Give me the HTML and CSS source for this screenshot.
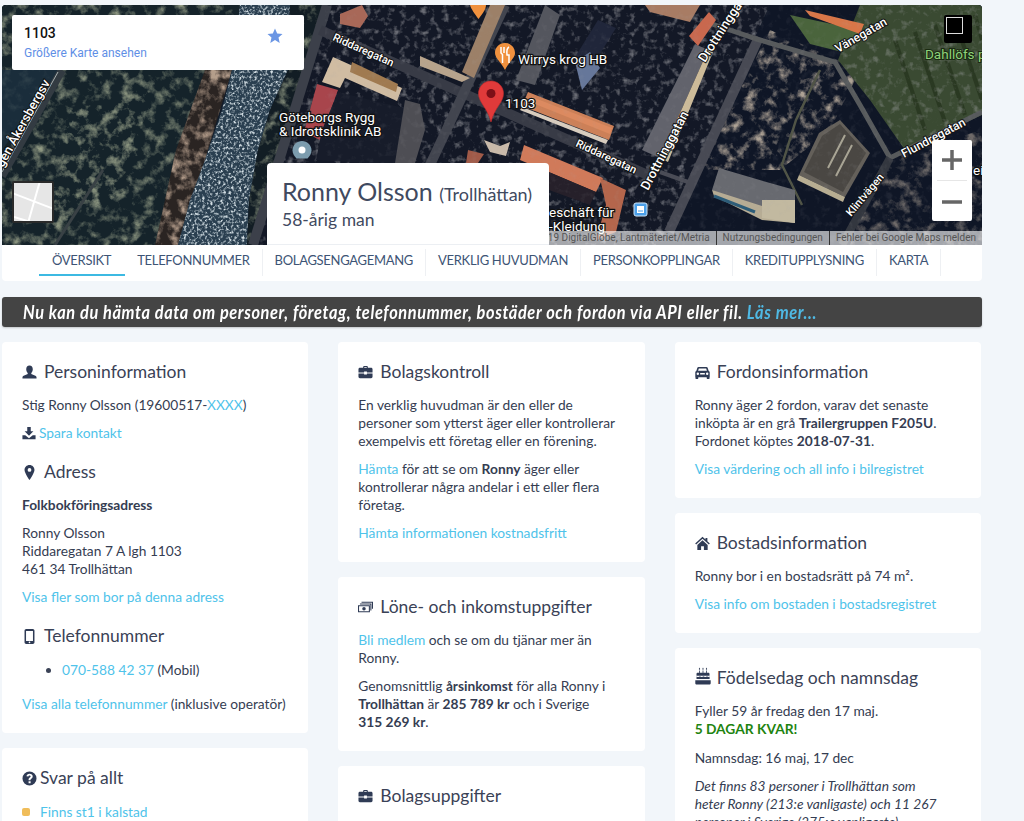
FILE: index.html
```html
<!DOCTYPE html>
<html lang="sv">
<head>
<meta charset="utf-8">
<title>Ronny Olsson</title>
<link rel="stylesheet" href="styles.css">
</head>
<body>
<svg class="sprite" aria-hidden="true">
  <symbol id="i-user" viewBox="0 0 16 16"><path d="M8 .5c2.300 0 3.500 1.800 3.500 4 0 1.600-.6 3-1.600 3.900v1.300l4.300 1.800c.9.400 1.300 1 1.300 1.900v1.100H.5v-1.100c0-.9.4-1.500 1.300-1.900l4.300-1.800V8.400C5.100 7.500 4.500 6.100 4.500 4.500c0-2.200 1.200-4 3.500-4z"/></symbol>
  <symbol id="i-save" viewBox="0 0 16 16"><path d="M6 1h4v5h3L8 11 3 6h3zM.5 10.500h3.200L8 14l4.300-3.500h3.200V15H.5z"/></symbol>
  <symbol id="i-pin" viewBox="0 0 16 16"><path fill-rule="evenodd" d="M8 0c3 0 5.300 2.300 5.300 5.300C13.300 8.500 8 16 8 16S2.700 8.500 2.700 5.300C2.700 2.300 5 0 8 0zm0 3.300a2 2 0 1 0 0 4 2 2 0 0 0 0-4z"/></symbol>
  <symbol id="i-phone" viewBox="0 0 16 16"><path fill-rule="evenodd" d="M4.500 0h7c1 0 1.800.8 1.800 1.800v12.400c0 1-.8 1.800-1.800 1.800h-7c-1 0-1.800-.8-1.800-1.800V1.800C2.700.8 3.500 0 4.500 0zm-.2 2v10.700h7.400V2zM8 13.300a.9.9 0 1 0 0 1.800.9.9 0 0 0 0-1.800z"/></symbol>
  <symbol id="i-q" viewBox="0 0 16 16"><path fill-rule="evenodd" d="M8 .5a7.500 7.500 0 1 1 0 15 7.500 7.500 0 0 1 0-15zM7 10.800v2.200h2.200v-2.200zM8 3C6.200 3 5 4 4.800 5.600l2 .3C6.900 5.200 7.300 4.800 8 4.800s1.200.4 1.200 1c0 .5-.3.8-.9 1.200-.9.6-1.300 1.200-1.300 2.200v.6h2.100v-.4c0-.5.2-.7.8-1.100 1-.7 1.500-1.400 1.500-2.600C11.400 4 10 3 8 3z"/></symbol>
  <symbol id="i-case" viewBox="0 0 16 16"><path fill-rule="evenodd" d="M5.500 3V2c0-.6.400-1 1-1h3c.6 0 1 .4 1 1v1h3.500c.8 0 1.500.7 1.500 1.500V8H9.500V7h-3v1H.500V4.500C.5 3.700 1.200 3 2 3zm1.200 0h2.600V2.200H6.700zM.5 9h6v1.200h3V9h6v3.500c0 .8-.7 1.500-1.500 1.500H2c-.8 0-1.500-.7-1.500-1.500z"/></symbol>
  <symbol id="i-money" viewBox="0 0 17 16"><path fill-rule="evenodd" d="M4 1.500h13v8h-1.200V2.700H4zM2.200 3.500h13v8H14V4.700H2.200zM0 5.500h13.500V13.500H0zm1.200 1.200v5.600h11.100V6.700zM6.800 7.500a2 2 0 1 1 0 4 2 2 0 0 1 0-4z"/></symbol>
  <symbol id="i-car" viewBox="0 0 16 16"><path fill-rule="evenodd" d="M3.800 2h8.400c.6 0 1.100.4 1.300 1l1 3c.7.300 1.200 1 1.200 1.800V13h-.2v1c0 .6-.4 1-1 1h-1c-.6 0-1-.4-1-1v-1H3.500v1c0 .6-.4 1-1 1h-1c-.6 0-1-.4-1-1v-1H.3V7.800C.3 7 .8 6.300 1.500 6l1-3c.2-.6.700-1 1.300-1zm.3 1.600L3.300 6h9.400l-.8-2.400zM3 8a1.300 1.300 0 1 0 0 2.600A1.300 1.300 0 0 0 3 8zm10 0a1.300 1.300 0 1 0 0 2.600A1.300 1.300 0 0 0 13 8zM5.500 8.500v1.500h5V8.500z"/></symbol>
  <symbol id="i-home" viewBox="0 0 16 16"><path d="M8 .8l3.200 2.900V2h2v3.500L15.800 8l-1 1.100L8 3 1.200 9.100.2 8zM8 4.500l5.500 5V15h-4v-4h-3v4h-4V9.500z"/></symbol>
  <symbol id="i-cake" viewBox="0 0 16 18"><path fill-rule="evenodd" d="M4.500.5l.7 1.500-.7.900-.7-.9zM8 .5l.7 1.500-.7.900-.7-.9zM11.500.5l.7 1.500-.7.900-.7-.9zM4.100 3.400h.8v2.300h-.8zM7.600 3.400h.8v2.300h-.8zM11.100 3.400h.8v2.300h-.8zM2.800 5.700h10.400c.8 0 1.300.5 1.300 1.300v1.800H1.500V7c0-.8.500-1.300 1.300-1.300zM1.500 9.500c.6.300 1 .6 1.600.6.800 0 1.200-.6 1.800-.6s1 .6 1.800.6 1.200-.6 1.800-.6 1 .6 1.800.6 1.200-.6 1.800-.6.900.4 1.500.5.800-.2 1-.4v2.500H1.500zM.3 13.300h15.400v2.900c0 .9-.6 1.400-1.500 1.400H1.800c-.9 0-1.500-.5-1.500-1.400z"/></symbol>
</svg>

<div class="page">
  <header class="hero">
    <svg class="map-art" viewBox="2 5 980 240" preserveAspectRatio="none" xmlns="http://www.w3.org/2000/svg">
      <defs>
        <filter id="f-trees" x="0" y="0" width="100%" height="100%">
          <feTurbulence type="fractalNoise" baseFrequency=".09" numOctaves="4" seed="7"/>
          <feColorMatrix values="0 0 0 0 .30  0 0 0 0 .34  0 0 0 0 .24  2.400 0 0 0 -1.150"/>
          <feComposite in2="SourceGraphic" operator="in"/>
        </filter>
        <filter id="f-brown" x="0" y="0" width="100%" height="100%">
          <feTurbulence type="fractalNoise" baseFrequency=".10" numOctaves="4" seed="3"/>
          <feColorMatrix values="0 0 0 0 .46  0 0 0 0 .34  0 0 0 0 .26  2.600 0 0 0 -1.100"/>
          <feComposite in2="SourceGraphic" operator="in"/>
        </filter>
        <filter id="f-water" x="0" y="0" width="100%" height="100%">
          <feTurbulence type="fractalNoise" baseFrequency=".38" numOctaves="2" seed="9"/>
          <feColorMatrix values="0 0 0 0 .66  0 0 0 0 .74  0 0 0 0 .78  3.200 0 0 0 -1.500"/>
          <feComposite in2="SourceGraphic" operator="in"/>
        </filter>
        <filter id="f-grain" x="0" y="0" width="100%" height="100%">
          <feTurbulence type="fractalNoise" baseFrequency=".14" numOctaves="3" seed="12"/>
          <feColorMatrix values="0 0 0 0 .42  0 0 0 0 .42  0 0 0 0 .44  3 0 0 0 -1.550"/>
          <feComposite in2="SourceGraphic" operator="in"/>
        </filter>
        <filter id="f-park" x="0" y="0" width="100%" height="100%">
          <feTurbulence type="fractalNoise" baseFrequency=".09" numOctaves="4" seed="21"/>
          <feColorMatrix values="0 0 0 0 .42  0 0 0 0 .36  0 0 0 0 .30  3 0 0 0 -1.450"/>
          <feComposite in2="SourceGraphic" operator="in"/>
        </filter>
      </defs>

      <rect x="2" y="5" width="980" height="240" fill="#121c2a"/>
      <!-- forest west of the river -->
      <polygon points="2,5 255,5 170,245 2,245" fill="#15232a"/>
      <polygon points="2,5 255,5 170,245 2,245" fill="#fff" filter="url(#f-trees)"/>
      <polygon points="2,70 60,70 2,150" fill="#1b3040" opacity=".8"/>
      <polygon points="70,110 150,90 130,190 50,230" fill="#fff" filter="url(#f-trees)" opacity=".7"/>
      <!-- river bank and river -->
      <polygon points="205,70 232,70 205,160 178,245 155,245 176,150" fill="#2a2422"/>
      <polygon points="205,70 232,70 205,160 178,245 155,245 176,150" fill="#fff" filter="url(#f-brown)"/>
      <polygon points="240,5 290,5 288,70 270,110 258,150 249,200 247,245 178,245 190,200 205,160 222,110 232,70" fill="#2a3f50"/>
      <polygon points="240,5 290,5 288,70 270,110 258,150 249,200 247,245 178,245 190,200 205,160 222,110 232,70" fill="#fff" filter="url(#f-water)"/>
      <!-- east bank -->
      <polygon points="290,5 325,5 252,245 247,245 249,200 258,150 270,110 288,70" fill="#121d24"/>
      <polygon points="290,5 325,5 252,245 247,245 249,200 258,150 270,110 288,70" fill="#fff" filter="url(#f-trees)"/>
      <!-- town ground -->
      <polygon points="325,5 770,5 660,245 252,245" fill="#131826"/>
      <polygon points="325,5 770,5 660,245 252,245" fill="#fff" filter="url(#f-grain)" opacity=".5"/>
      <!-- park and field -->
      <polygon points="770,5 982,5 982,245 660,245" fill="#0f1626"/>
      <polygon points="770,30 860,70 830,130 780,170 700,170" fill="#fff" filter="url(#f-park)"/>
      <polygon points="880,160 982,130 982,245 850,245" fill="#fff" filter="url(#f-park)" opacity=".6"/>
      <polygon points="860,5 982,5 982,115 905,150 870,100 838,60" fill="#3a4a32"/>
      <g stroke="#27351f" stroke-width="4" opacity=".8">
        <path d="M895 40L925 130M915 32L945 122M935 25L965 115M955 20L982 100M975 15L982 40"/>
      </g>
      <polygon points="860,5 982,5 982,115 905,150 870,100 838,60" fill="#fff" filter="url(#f-grain)" opacity=".3"/>
      <polygon points="790,15 860,30 842,52 810,44" fill="#4a643c"/>

      <!-- roads -->
      <g fill="none" stroke-linecap="butt">
        <path d="M62 70L2 176" stroke="#333b42" stroke-width="8"/>
        <path d="M58 72L2 172" stroke="#a8b0b0" stroke-width="1"/>
        <path d="M103 170L55 245" stroke="#394145" stroke-width="3"/>
        <path d="M327 5L253 245" stroke="#3c404a" stroke-width="10"/>
        <path d="M320 30L650 176" stroke="#383b46" stroke-width="10"/>
        <path d="M505 5L430 165" stroke="#42454f" stroke-width="10"/>
        <path d="M759 37L669 232" stroke="#484a54" stroke-width="10"/>
        <path d="M700 20L760 40L835 62L860 105L890 158L982 112" stroke="#575a5c" stroke-width="5"/>
        <path d="M890 158L842 245" stroke="#33373f" stroke-width="8"/>
        <path d="M820 70L796 120L782 165L802 205" stroke="#505446" stroke-width="2.500"/>
        <path d="M660 172L688 182" stroke="#4a4c56" stroke-width="4"/>
      </g>

      <!-- buildings -->
      <g>
        <polygon points="340,14 362,5 368,16 360,28 340,24" fill="#a86858"/>
        <polygon points="333,57 402,88 397,101 345,78 340,88 322,82" fill="#d0bca2"/>
        <polygon points="352,62 398,84 396,92 350,72" fill="#a07a50"/>
        <polygon points="317,84 338,90 320,140 304,132" fill="#a8454c"/>
        <polygon points="338,92 404,108 422,110 395,165 316,160 322,130" fill="#171c2a"/>
        <polygon points="420,56 470,78 462,82 420,66" fill="#b8a48c"/>
        <polygon points="505,5 474,78 462,72 490,5" fill="#9c8068"/>
        <polygon points="405,100 420,104 425,130 415,163 395,163" fill="#4e4e54"/>
        <polygon points="484,140 500,146 510,142 506,156 490,152" fill="#c9baaa"/>
        <polygon points="468,150 484,154 478,163 466,163" fill="#a05a48"/>
        <polygon points="528,92 614,126 609,140 522,106" fill="#cc8058"/>
        <polygon points="532,97 612,128 610,134 530,102" fill="#dc8a60"/>
        <polygon points="522,107 608,140 606,144 520,110" fill="#d8cdbf"/>
        <polygon points="524,145 603,178 596,192 520,160" fill="#d07a5a"/>
        <polygon points="549,172 596,192 590,205 549,190" fill="#26202a"/>
        <polygon points="600,178 626,190 616,232 596,240 606,205" fill="#b4664c"/>
        <polygon points="695,44 708,50 660,158 642,150" fill="#62636c"/>
        <polygon points="708,50 713,52 668,162 660,158" fill="#cdbb99"/>
        <polygon points="689,36 709,12 716,20 698,46" fill="#c9684e"/>
        <polygon points="645,5 700,5 690,22 650,12" fill="#a87c64"/>
        <polygon points="805,10 864,24 860,34 810,16" fill="#d87648"/>
        <polygon points="598,20 616,28 590,70 572,62" fill="#20263a"/>
        <polygon points="575,62 590,52 600,68 582,90" fill="#66779a"/>
        <polygon points="545,5 560,15 535,85 516,80" fill="#54565e"/>
        <polygon points="840,120 870,153 845,197 799,175 819,133" fill="#64605a"/>
        <polygon points="840,124 866,153 843,192 804,172 822,136" fill="#4a4743"/>
        <path d="M845 135L828 168M852 145L836 176" stroke="#a8a494" stroke-width="2"/>
        <polygon points="799,175 845,197 843,202 797,180" fill="#b8ae92"/>
        <polygon points="719,168 770,183 795,190 795,223 762,217 712,190" fill="#686a70"/>
        <polygon points="712,190 762,206 795,214 795,223 762,220 714,196" fill="#b6ac94"/>
        <polygon points="762,200 795,200 795,223 762,218" fill="#c2b9a0"/>
        <path d="M714 196L755 212" stroke="#2c5c78" stroke-width="3"/>
      </g>
      <rect x="325" y="5" width="657" height="240" fill="#fff" filter="url(#f-grain)" opacity=".1"/>

      <!-- street and place names -->
      <g class="road-labels">
        <text class="rl-big" transform="translate(3 168) rotate(-61)">gen Åkersbergsv</text>
        <text transform="translate(332 40) rotate(24)">Riddaregatan</text>
        <text transform="translate(575 146) rotate(25)">Riddaregatan</text>
        <text class="rl-big" transform="translate(648 191) rotate(-62)">Drottninggatan</text>
        <text class="rl-big" transform="translate(705 63) rotate(-57)">Drottninggatan</text>
        <text class="rl-mid" transform="translate(838 53) rotate(-30)">Vänegatan</text>
        <text class="rl-mid" transform="translate(904 158) rotate(-28)">Flundregatan</text>
        <text transform="translate(851 217) rotate(-50)">Klintvägen</text>
      </g>
      <g class="poi-labels">
        <text x="279" y="122">Göteborgs Rygg</text>
        <text x="279" y="136">&amp; Idrottsklinik AB</text>
        <text x="518" y="64">Wirrys krog HB</text>
        <text x="505" y="108">1103</text>
        <text x="549" y="217">eschäft für</text>
        <text x="549" y="231">-Kleidung</text>
        <text x="973" y="175">ei</text>
      </g>
      <text class="poi-green" x="925" y="59">Dahllöfs p</text>

      <!-- markers -->
      <path d="M302 141c5 0 9.500 4 9.500 9.500 0 3-2 6-4 8h-11c-2-2-4-5-4-8 0-5.500 4.500-9.500 9.500-9.500z" fill="#7c9cae"/>
      <circle cx="302" cy="150" r="3.500" fill="#fff"/>
      <path d="M478 5h8c0 5-4 9-7.500 14C475 14 471 9 470 5z" fill="#f0913e"/>
      <path d="M505 43c6 0 10 4.500 10 10 0 5-6 9-10 17-4-8-10-12-10-17 0-5.500 4-10 10-10z" fill="#f0913e"/>
      <path d="M501 47v6l1.500 1.500V63M504 47v6M509 47c-2 1-2.500 4-2 8h2v8" fill="none" stroke="#fff" stroke-width="1.500"/>
      <path d="M491 81c7 0 12.500 5.500 12.500 12.500 0 9-9 14-12.500 28.500-3.500-14.500-12.500-19.500-12.500-28.500C478.500 86.500 484 81 491 81z" fill="#e03a3a" stroke="#c42a2a" stroke-width=".6"/>
      <circle cx="491" cy="93.500" r="4.500" fill="#7c0f17"/>
      <rect x="634" y="203" width="13" height="13" rx="2" fill="#4b9fe8" stroke="#cfe4f7"/>
      <path d="M637 206h7v7h-7z" fill="#fff"/>
      <path d="M638 211h5" stroke="#4b9fe8" stroke-width="1"/>
    </svg>

    <div class="place-card">
      <div class="place-text">
        <strong class="place-name">1103</strong>
        <a class="place-link" href="#">Größere Karte ansehen</a>
      </div>
      <svg class="place-star" viewBox="0 0 16 16"><path d="M8 .5l2.200 5 5.300.5-4 3.600 1.200 5.300L8 12.100 3.300 14.900l1.200-5.300-4-3.600 5.300-.5z"/></svg>
    </div>
    <div class="fullscreen"><span class="fullscreen-box"></span></div>
    <div class="zoom-ctl">
      <svg class="zoom-btn" viewBox="0 0 40 40"><path d="M10 20h20M20 10v20"/></svg>
      <span class="zoom-sep"></span>
      <svg class="zoom-btn" viewBox="0 0 40 40"><path d="M10 21h20"/></svg>
    </div>
    <div class="sat-thumb">
      <svg viewBox="0 0 38 38"><rect width="38" height="38" fill="#e6e6e6"/><path d="M-2 10L40 26M26-2L14 40M0 34L20 40" stroke="#fff" stroke-width="2" fill="none"/></svg>
    </div>
    <div class="attrib">
      <span class="attrib-item attrib-first">©2019 DigitalGlobe, Lantmäteriet/Metria</span>
      <span class="attrib-item">Nutzungsbedingungen</span>
      <span class="attrib-item">Fehler bei Google Maps melden</span>
    </div>
    <div class="title-card">
      <h1 class="title-name">Ronny Olsson <small class="title-city">(Trollhättan)</small></h1>
      <p class="title-sub">58-årig man</p>
    </div>
  </header>

  <nav class="tabs">
    <a class="tab tab-active" href="#">Översikt</a>
    <a class="tab" href="#">Telefonnummer</a>
    <a class="tab" href="#">Bolagsengagemang</a>
    <a class="tab" href="#">Verklig huvudman</a>
    <a class="tab" href="#">Personkopplingar</a>
    <a class="tab" href="#">Kreditupplysning</a>
    <a class="tab" href="#">Karta</a>
  </nav>

  <div class="banner"><span class="banner-text">Nu kan du hämta data om personer, företag, telefonnummer, bostäder och fordon via API eller fil. <a class="banner-link" href="#">Läs mer...</a></span></div>

  <main class="columns">
    <div class="col">
      <section class="card">
        <h3 class="card-h"><svg class="ic"><use href="#i-user"/></svg>Personinformation</h3>
        <p>Stig Ronny Olsson (19600517-<a href="#">XXXX</a>)</p>
        <p><svg class="ic-inline"><use href="#i-save"/></svg><a href="#">Spara kontakt</a></p>
        <h3 class="card-h card-h-sub"><svg class="ic"><use href="#i-pin"/></svg>Adress</h3>
        <p><b>Folkbokföringsadress</b></p>
        <p>Ronny Olsson<br>Riddaregatan 7 A lgh 1103<br>461 34 Trollhättan</p>
        <p><a href="#">Visa fler som bor på denna adress</a></p>
        <h3 class="card-h card-h-sub"><svg class="ic"><use href="#i-phone"/></svg>Telefonnummer</h3>
        <ul class="phones"><li><a href="#">070-588 42 37</a> (Mobil)</li></ul>
        <p class="last"><a href="#">Visa alla telefonnummer</a> (inklusive operatör)</p>
      </section>
      <section class="card">
        <h3 class="card-h card-h-tight"><svg class="ic ic-q"><use href="#i-q"/></svg>Svar på allt</h3>
        <p class="qa"><span class="qa-dot"></span><a href="#">Finns st1 i kalstad</a></p>
      </section>
    </div>

    <div class="col">
      <section class="card">
        <h3 class="card-h"><svg class="ic"><use href="#i-case"/></svg>Bolagskontroll</h3>
        <p>En verklig huvudman är den eller de personer som ytterst äger eller kontrollerar exempelvis ett företag eller en förening.</p>
        <p><a href="#">Hämta</a> för att se om <b>Ronny</b> äger eller kontrollerar några andelar i ett eller flera företag.</p>
        <p class="last"><a href="#">Hämta informationen kostnadsfritt</a></p>
      </section>
      <section class="card">
        <h3 class="card-h"><svg class="ic"><use href="#i-money"/></svg>Löne- och inkomstuppgifter</h3>
        <p><a href="#">Bli medlem</a> och se om du tjänar mer än Ronny.</p>
        <p class="last">Genomsnittlig <b>årsinkomst</b> för alla Ronny i <b>Trollhättan</b> är <b>285&nbsp;789&nbsp;kr</b> och i Sverige <b>315&nbsp;269&nbsp;kr</b>.</p>
      </section>
      <section class="card">
        <h3 class="card-h"><svg class="ic"><use href="#i-case"/></svg>Bolagsuppgifter</h3>
      </section>
    </div>

    <div class="col">
      <section class="card">
        <h3 class="card-h"><svg class="ic"><use href="#i-car"/></svg>Fordonsinformation</h3>
        <p>Ronny äger 2 fordon, varav det senaste inköpta är en grå <b>Trailergruppen F205U</b>. Fordonet köptes <b>2018-07-31</b>.</p>
        <p class="last"><a href="#">Visa värdering och all info i bilregistret</a></p>
      </section>
      <section class="card">
        <h3 class="card-h"><svg class="ic"><use href="#i-home"/></svg>Bostadsinformation</h3>
        <p>Ronny bor i en bostadsrätt på 74 m².</p>
        <p class="last"><a href="#">Visa info om bostaden i bostadsregistret</a></p>
      </section>
      <section class="card">
        <h3 class="card-h"><svg class="ic ic-cake"><use href="#i-cake"/></svg>Födelsedag och namnsdag</h3>
        <p class="birth">Fyller 59 år fredag den 17 maj.<br><b class="countdown">5 DAGAR KVAR!</b></p>
        <p>Namnsdag: 16 maj, 17 dec</p>
        <p><i>Det finns 83 personer i Trollhättan som<br>heter Ronny (213:e vanligaste) och 11&nbsp;267<br>personer i Sverige (275:e vanligaste).</i></p>
      </section>
    </div>
  </main>
</div>
</body>
</html>
```
FILE: styles.css
```css
* { box-sizing: border-box; }
html, body { height: 821px; overflow: hidden; }
body {
  margin: 0;
  background: #f2f6fa;
  color: #353d52;
  font: 13.75px/18px Lato, "Noto Sans", sans-serif;
}
a { color: #4fc3ea; text-decoration: none; }
b { font-weight: 700; }
.sprite { display: none; }

.page { width: 980px; margin: 5px 0 0 2px; }

/* map header */
.hero {
  position: relative;
  height: 240px;
  overflow: hidden;
  border-radius: 4px 4px 0 0;
  background: #14202c;
}
.map-art { display: block; width: 980px; height: 240px; }
.road-labels text {
  font: 500 11px Roboto, sans-serif;
  fill: #fff;
  stroke: #111;
  stroke-width: 2px;
  paint-order: stroke;
}
.road-labels .rl-big { font-size: 13px; }
.road-labels .rl-mid { font-size: 12px; }
.poi-labels text {
  font: 400 13.5px Roboto, sans-serif;
  fill: #fff;
  stroke: #111;
  stroke-width: 2.5px;
  paint-order: stroke;
}
.poi-green {
  font: 400 13.5px Roboto, sans-serif;
  fill: #8fd27a;
  stroke: #1a2a12;
  stroke-width: 2px;
  paint-order: stroke;
}

.place-card {
  position: absolute;
  left: 10px;
  top: 10px;
  width: 292px;
  height: 55px;
  padding: 10px 12px;
  display: flex;
  justify-content: space-between;
  background: #fff;
  border-radius: 2px;
  font-family: Roboto, sans-serif;
}
.place-text { display: flex; flex-direction: column; }
.place-name { font-size: 14px; font-weight: 500; line-height: 17px; color: #111; }
.place-link { margin-top: 3px; font-size: 12px; line-height: 16px; color: #5f8fe6; }
.place-star { width: 16px; height: 16px; margin: 3px 9px 0 0; fill: #6b96e4; }

.fullscreen {
  position: absolute;
  right: 10px;
  top: 10px;
  width: 28px;
  height: 28px;
  padding: 2px;
  background: #000;
  border-radius: 2px;
}
.fullscreen-box { display: block; width: 17px; height: 17px; border: 1px solid #ddd; }

.zoom-ctl {
  position: absolute;
  right: 10px;
  top: 135px;
  width: 40px;
  height: 81px;
  display: flex;
  flex-direction: column;
  align-items: center;
  background: #fff;
  border-radius: 2px;
}
.zoom-btn { width: 40px; height: 40px; flex: none; fill: none; stroke: #666; stroke-width: 3.500; }
.zoom-sep { width: 30px; height: 1px; flex: none; background: #e6e6e6; }

.sat-thumb {
  position: absolute;
  left: 10px;
  top: 176px;
  width: 42px;
  height: 42px;
  border: 2px solid #2a2a2a;
  border-radius: 2px;
  overflow: hidden;
  background: #fff;
}
.sat-thumb svg { display: block; width: 38px; height: 38px; }

.attrib {
  position: absolute;
  right: 0;
  bottom: 0;
  width: 433px;
  height: 14px;
  display: flex;
  justify-content: flex-end;
  background: rgba(255, 255, 255, .62);
  font: 10px/14px Roboto, sans-serif;
  color: #555;
  white-space: nowrap;
}
.attrib-item { padding: 0 6px; border-left: 1px solid #333; }
.attrib-first { border-left: 0; }

.title-card {
  position: absolute;
  left: 265px;
  bottom: 0;
  width: 282px;
  height: 82px;
  padding: 13px 14px 0 15px;
  background: #fff;
  border-radius: 4px 4px 0 0;
  border-bottom: 1px solid #eceff3;
}
.title-name { margin: 0; font-size: 25px; line-height: 30px; font-weight: 400; color: #3f4a60; white-space: nowrap; }
.title-city { font-size: 18px; }
.title-sub { margin: 0; font-size: 17.5px; line-height: 22px; color: #3f4a60; }

/* tabs */
.tabs {
  height: 36px;
  padding: 4px 0 0 37px;
  display: flex;
  background: #fff;
  border-radius: 0 0 4px 4px;
}
.tab {
  height: 27px;
  padding: 0 12px;
  font-size: 13px;
  letter-spacing: -.3px;
  line-height: 22px;
  text-transform: uppercase;
  color: #3d5475;
  border-right: 1px solid #eef0f3;
  white-space: nowrap;
}
.tab-active { padding: 0 14px 0 13px; border-right: 0; border-bottom: 2px solid #3cb9e2; }

/* banner */
.banner {
  height: 30px;
  margin-top: 16px;
  padding-left: 21px;
  background: #444;
  border-radius: 3px;
  color: #fff;
  font: italic 700 19px/30px Lato, sans-serif;
  letter-spacing: .7px;
  white-space: nowrap;
  box-shadow: 0 1px 2px rgba(0, 0, 0, .2);
}
.banner-text { display: inline-block; transform: scaleX(.86); transform-origin: 0 50%; }
.banner-link { color: #4fb9e4; }

/* columns */
.columns { margin-top: 15px; padding-right: 1px; display: grid; grid-template-columns: repeat(3, 1fr); gap: 30px; }
.col { display: flex; flex-direction: column; gap: 15px; }
.card { padding: 20px; background: #fff; border-radius: 4px; }
.card p { margin: 0 0 10px; }
.card p.last { margin-bottom: 0; }
.card p.birth { margin-bottom: 11px; }
.card-h {
  margin: 0 0 15px;
  padding-top: 1px;
  display: flex;
  align-items: center;
  font-size: 17.5px;
  line-height: 18px;
  font-weight: 400;
  color: #3a4256;
}
.card-h-sub { margin-top: 20px; }
.card-h-tight { margin-bottom: 16px; }
.ic { width: 15px; height: 15px; margin-right: 7px; flex: none; fill: #2f3b55; }
.ic-q { margin-right: 3px; }
.ic-cake { width: 16px; height: 18px; margin: -4px 6px 0 0; }
.ic-inline { width: 14px; height: 14px; margin-right: 3px; vertical-align: -2px; fill: #2f3b55; }
.phones { margin: 16px 0; padding-left: 40px; }
.phones li::marker { color: #3a4256; }
.qa { display: flex; align-items: center; }
.qa-dot { width: 8px; height: 8px; margin-right: 10px; border-radius: 2px; background: #f0bd5a; }
.countdown { color: #1e8410; }
```
